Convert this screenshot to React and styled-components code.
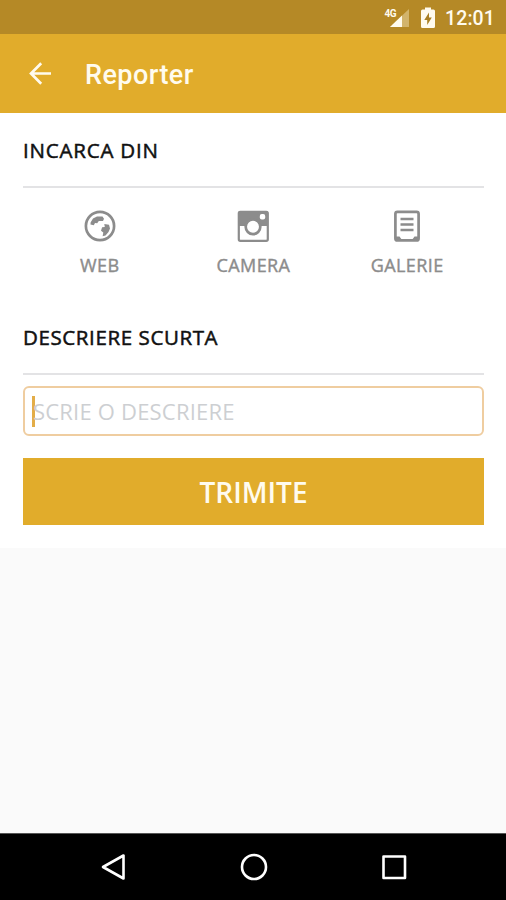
import React from 'react';
import styled, { createGlobalStyle, ThemeProvider } from 'styled-components';

const theme = {
  gold: '#e1ac2b',
  darkGold: '#b58926',
  grey: '#8c8c8c',
  line: '#e3e3e5',
  body: '"Open Sans", "Noto Sans", sans-serif',
};

const GlobalStyle = createGlobalStyle`
  * {
    box-sizing: border-box;
  }
  body {
    margin: 0;
    background: #fafafa;
  }
`;

const Screen = styled.div`
  width: 506px;
  height: 900px;
  display: flex;
  flex-direction: column;
  overflow: hidden;
  background: #fafafa;
  font-family: ${props => props.theme.body};
`;

const StatusBar = styled.div`
  height: 34px;
  flex: none;
  display: flex;
  align-items: center;
  justify-content: flex-end;
  padding: 1px 11px 0 0;
  background: ${props => props.theme.darkGold};
  svg {
    display: block;
    margin-left: 11px;
  }
`;

const Clock = styled.span`
  margin: 2px 0 0 10px;
  color: #fffbee;
  font: 500 19.5px/34px Roboto, sans-serif;
  letter-spacing: 0.1px;
`;

const AppBar = styled.header`
  height: 79px;
  flex: none;
  display: flex;
  align-items: center;
  padding: 0 0 0 24px;
  background: ${props => props.theme.gold};
`;

const BackButton = styled.button`
  width: 32px;
  height: 32px;
  padding: 0;
  border: 0;
  background: none;
  svg {
    display: block;
  }
`;

const Title = styled.h1`
  margin: 3px 0 0 29px;
  color: #fffbee;
  font: 500 27px/32px Roboto, sans-serif;
  letter-spacing: 0.45px;
`;

const Form = styled.main`
  height: 435px;
  flex: none;
  padding: 0 22px 0 23px;
  background: #fff;
`;

const SectionTitle = styled.h2`
  height: 75px;
  margin: 0;
  border-bottom: 2px solid ${props => props.theme.line};
  color: #111;
  font-size: 20.5px;
  font-weight: 400;
  line-height: 75px;
  letter-spacing: ${props => props.$spacing};
  -webkit-text-stroke: 0.5px #111;
`;

const Sources = styled.div`
  height: 112px;
  display: grid;
  grid-template-columns: repeat(3, 1fr);
`;

const Source = styled.button`
  display: flex;
  flex-direction: column;
  align-items: center;
  padding: 22px 0 0;
  border: 0;
  background: none;
  color: ${props => props.theme.grey};
  svg {
    display: block;
  }
`;

const SourceLabel = styled.span`
  margin-top: 11px;
  font: 400 18px/24px ${props => props.theme.body};
  letter-spacing: 0.4px;
  -webkit-text-stroke: 0.4px ${props => props.theme.grey};
`;

const Field = styled.div`
  height: 50px;
  margin-top: 11px;
  display: flex;
  align-items: center;
  padding-left: 7px;
  border: 2px solid #efcda0;
  border-radius: 6px;
`;

const Caret = styled.i`
  width: 3px;
  height: 31px;
  flex: none;
  background: #e3ad48;
`;

const Placeholder = styled.span`
  margin-left: -2px;
  color: #cdcfd2;
  font-size: 22px;
  line-height: 30px;
  letter-spacing: 0.2px;
`;

const Submit = styled.button`
  display: block;
  width: 100%;
  height: 67px;
  margin-top: 22px;
  padding: 1px 0 0;
  border: 0;
  background: ${props => props.theme.gold};
  color: #fffbee;
  font: 600 28px/40px ${props => props.theme.body};
`;

const NavBar = styled.nav`
  height: 67px;
  margin-top: auto;
  display: flex;
  justify-content: center;
  align-items: center;
  gap: 108.5px;
  padding-left: 1px;
  border-top: 1px solid #555;
  background: #000;
  svg {
    display: block;
  }
`;

const SignalIcon = () => (
  <svg width="26" height="22" viewBox="0 0 26 22">
    <path d="M25 2V20H6Z" fill="#d2b46c" />
    <path d="M18 8.6V20H6Z" fill="#fffbee" />
    <text x="0.5" y="9.5" fill="#fffbee" fontFamily="Roboto, sans-serif" fontSize="10" fontWeight="700" textLength="12">4G</text>
  </svg>
);

const BatteryIcon = () => (
  <svg width="14" height="22" viewBox="0 0 14 22">
    <path d="M4 0.5H10V2.5H12.5Q14 2.5 14 4V19.5Q14 21 12.5 21H1.5Q0 21 0 19.5V4Q0 2.5 1.5 2.5H4Z" fill="#fffbee" />
    <path d="M8 5.5L3.3 13H6.2V18L10.8 10.6H8Z" fill="#a97f22" />
  </svg>
);

const BackIcon = () => (
  <svg width="32" height="32" viewBox="0 0 32 32" fill="none" stroke="#fffbee" strokeWidth="2.7">
    <path d="M27 15.5H7M17.2 5.3L7 15.5L17.2 25.7" />
  </svg>
);

const GlobeIcon = () => (
  <svg width="32" height="32" viewBox="0 0 32 32">
    <circle cx="16" cy="16" r="14.1" fill="none" stroke="currentColor" strokeWidth="2.7" />
    <path d="M6.6 12.6L9 8.5L13 6.6H18.5L20 8.7L19 11H14.8L13.2 13.2L11 12.9L9.8 15.2L6.5 14.6Z" fill="currentColor" />
    <path d="M20.3 14L25 14.8L26 18.4L24.5 22L21.5 25.6L18.6 26.2L19.3 22.6L17 20.8L18.1 17.3L20.8 17Z" fill="currentColor" />
  </svg>
);

const CameraIcon = () => (
  <svg width="32" height="32" viewBox="0 0 32 32">
    <rect x="1.8" y="1.8" width="29" height="29" rx="1.5" fill="none" stroke="currentColor" strokeWidth="2.2" />
    <path d="M1.5 1.5H31V16H1.5Z" fill="currentColor" />
    <circle cx="16" cy="16.8" r="7.3" fill="#fff" stroke="currentColor" strokeWidth="2.7" />
    <rect x="22.8" y="4" width="5.4" height="5.4" rx="2" fill="#fff" />
  </svg>
);

const DocumentIcon = () => (
  <svg width="32" height="32" viewBox="0 0 32 32" fill="none" stroke="currentColor">
    <rect x="4.4" y="1.8" width="23.2" height="28.6" rx="2" strokeWidth="2.7" />
    <path d="M9.5 9H22.5M9.5 14.5H22.5M9.5 20H22.5" strokeWidth="2.4" />
    <path d="M5 26.5H8.5L10.5 29.2H5ZM27 26.5H23.5L21.5 29.2H27Z" fill="currentColor" stroke="none" />
  </svg>
);

const sources = [
  { label: 'WEB', Icon: GlobeIcon },
  { label: 'CAMERA', Icon: CameraIcon },
  { label: 'GALERIE', Icon: DocumentIcon },
];

export default () => (
  <ThemeProvider theme={theme}>
    <GlobalStyle />
    <Screen>
      <StatusBar>
        <SignalIcon />
        <BatteryIcon />
        <Clock>12:01</Clock>
      </StatusBar>
      <AppBar>
        <BackButton aria-label="Back"><BackIcon /></BackButton>
        <Title>Reporter</Title>
      </AppBar>
      <Form>
        <SectionTitle $spacing="0.8px">INCARCA DIN</SectionTitle>
        <Sources>
          {sources.map(({ label, Icon }) => (
            <Source key={label}>
              <Icon />
              <SourceLabel>{label}</SourceLabel>
            </Source>
          ))}
        </Sources>
        <SectionTitle $spacing="0.6px">DESCRIERE SCURTA</SectionTitle>
        <Field>
          <Caret />
          <Placeholder>SCRIE O DESCRIERE</Placeholder>
        </Field>
        <Submit>TRIMITE</Submit>
      </Form>
      <NavBar>
        <svg width="32" height="32" viewBox="0 0 32 32" fill="none" stroke="#fff" strokeWidth="2.6" strokeLinejoin="round">
          <path d="M26.5 4.5V27.5L6 16Z" />
        </svg>
        <svg width="32" height="32" viewBox="0 0 32 32" fill="none" stroke="#fff" strokeWidth="2.6">
          <circle cx="16" cy="16" r="12" />
        </svg>
        <svg width="32" height="32" viewBox="0 0 32 32" fill="none" stroke="#fff" strokeWidth="2.6" strokeLinejoin="round">
          <path d="M5.5 5.5H27V27H5.5Z" />
        </svg>
      </NavBar>
    </Screen>
  </ThemeProvider>
);
